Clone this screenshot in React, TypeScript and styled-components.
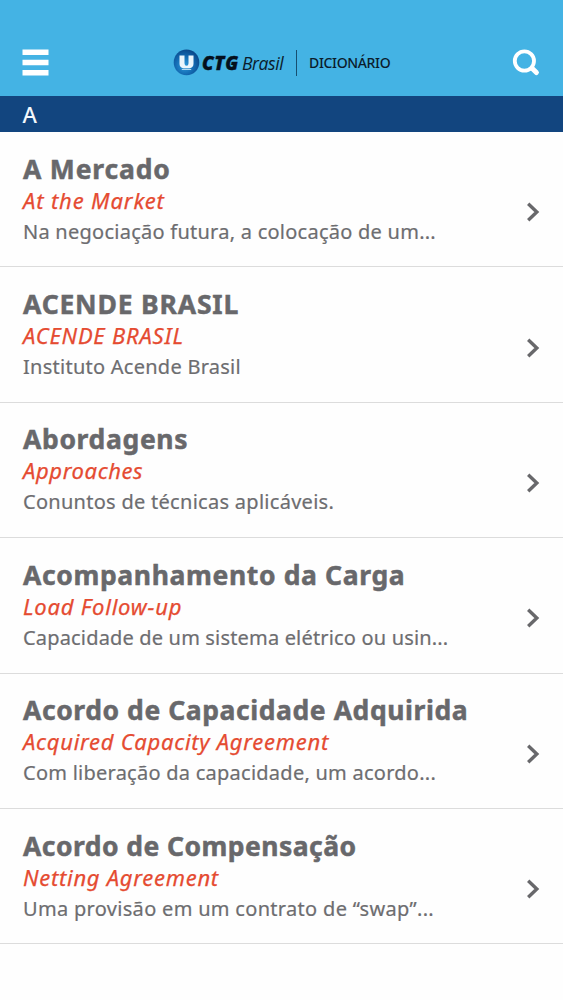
import React from "react";
import styled, { createGlobalStyle } from "styled-components";

const GlobalStyle = createGlobalStyle`
  body { margin: 0; background: #fefefe; font-family: "Noto Sans", "Open Sans", sans-serif; }
`;

const Screen = styled.main`
  width: 563px;
  height: 1000px;
  overflow: hidden;
  background: #fefefe;
`;

const Header = styled.header`
  display: grid;
  grid-template-columns: 60px 1fr 60px;
  align-items: center;
  height: 96px;
  padding-top: 29px;
  box-sizing: border-box;
  background: #44b3e4;
`;

const IconButton = styled.button<{ $side: "left" | "right" }>`
  display: flex;
  justify-content: ${(p) => (p.$side === "left" ? "flex-start" : "flex-end")};
  padding: ${(p) => (p.$side === "left" ? "0 0 0 22px" : "0 23px 0 0")};
  border: 0;
  background: none;
`;

const Brand = styled.div`
  display: flex;
  align-items: center;
  height: 28px;
  padding-left: 113px;
  color: #0b1c2c;
  white-space: nowrap;
`;

const BrandBold = styled.span`
  width: 39px;
  margin-left: 2px;
  color: #04101c;
  font: italic 800 18.5px/28px "Open Sans", sans-serif;
  letter-spacing: 0.7px;
  -webkit-text-stroke: 0.4px currentColor;
`;

const BrandLight = styled.span`
  width: 44px;
  padding-left: 1px;
  box-sizing: border-box;
  font: italic 400 17.5px/28px "Open Sans", sans-serif;
  letter-spacing: -0.4px;
`;

const Divider = styled.i`
  width: 1px;
  height: 26px;
  margin: 0 12px 0 11px;
  background: #174f70;
`;

const Product = styled.span`
  font: 500 14px/28px "Noto Sans", sans-serif;
  letter-spacing: -0.35px;
`;

const SectionBar = styled.h2`
  height: 36px;
  margin: 0;
  padding-left: 22.5px;
  background: #12457f;
  color: #f4f8fc;
  font: 500 22px/36px "Noto Sans", sans-serif;
`;

const List = styled.ul`
  margin: 0;
  padding: 0;
  list-style: none;
`;

const Row = styled.li`
  display: flex;
  align-items: center;
  justify-content: space-between;
  height: 135.4px;
  padding: 0 23px;
  box-sizing: border-box;
  border-bottom: 1px solid #dcdcdc;
`;

const Texts = styled.div`
  display: flex;
  flex-direction: column;
  align-items: flex-start;
  height: 97px;
  white-space: nowrap;
`;

const Title = styled.h3<{ $spacing: number }>`
  margin: 0;
  color: #68686b;
  font: 700 26.5px/36px "Noto Sans", sans-serif;
  letter-spacing: ${(p) => p.$spacing}px;
  -webkit-text-stroke: 0.5px currentColor;
`;

const Translation = styled.em<{ $spacing: number }>`
  color: #e54b31;
  font: italic 400 22px/26px "Noto Sans", sans-serif;
  letter-spacing: ${(p) => p.$spacing}px;
  -webkit-text-stroke: 0.25px currentColor;
`;

const Summary = styled.p<{ $spacing: number }>`
  margin: 4px 0 0;
  color: #6d6d70;
  font: 400 20px/30px "Noto Sans", sans-serif;
  letter-spacing: ${(p) => p.$spacing}px;
  -webkit-text-stroke: 0.2px currentColor;
`;

type Entry = { title: string; translation: string; summary: string; spacing: [number, number, number] };

const entries: Entry[] = [
  { title: "A Mercado", translation: "At the Market", summary: "Na negociação futura, a colocação de um...", spacing: [0.82, 0.85, 0.25] },
  { title: "ACENDE BRASIL", translation: "ACENDE BRASIL", summary: "Instituto Acende Brasil", spacing: [0.82, 0.8, 0.26] },
  { title: "Abordagens", translation: "Approaches", summary: "Conuntos de técnicas aplicáveis.", spacing: [0.65, 0.6, 0.28] },
  { title: "Acompanhamento da Carga", translation: "Load Follow-up", summary: "Capacidade de um sistema elétrico ou usin...", spacing: [0.63, 0.78, 0.17] },
  { title: "Acordo de Capacidade Adquirida", translation: "Acquired Capacity Agreement", summary: "Com liberação da capacidade, um acordo...", spacing: [0.57, 0.72, 0.25] },
  { title: "Acordo de Compensação", translation: "Netting Agreement", summary: "Uma provisão em um contrato de “swap”...", spacing: [0.45, 0.72, 0.31] },
];

const MenuIcon = () => (
  <svg width="27" height="28" viewBox="0 0 27 28" fill="#fff">
    <path d="M.5 .5h26v5.5H.5zM.5 10.8h26v5.5H.5zM.5 21h26v5.4H.5z" />
  </svg>
);

const SearchIcon = () => (
  <svg width="28" height="28" viewBox="0 0 28 28" fill="none" stroke="#fff" strokeLinecap="round">
    <circle cx="12.4" cy="12" r="9.6" strokeWidth="3.8" />
    <path d="M20 19.2l4.4 4.4" strokeWidth="5" />
  </svg>
);

const LogoMark = () => (
  <svg width="27" height="28" viewBox="0 0 27 28">
    <defs>
      <radialGradient id="ball" cx="42%" cy="62%" r="62%">
        <stop offset="0" stopColor="#2b9bdc" />
        <stop offset=".6" stopColor="#1268b0" />
        <stop offset="1" stopColor="#0a4a8c" />
      </radialGradient>
    </defs>
    <circle cx="13.5" cy="13.4" r="12.8" fill="url(#ball)" />
    <path d="M6.5 6.5h5v7.7q0 2.6 2 2.6t2-2.6V6.5h5v8.3q0 3.8-4 4.4h-6q-4-.6-4-4.4z" fill="#e9f5fc" />
    <path d="M8.8 20.4h9.4" stroke="#bfe2f5" strokeWidth="1" />
  </svg>
);

const ChevronIcon = styled.svg`
  flex: none;
  margin-top: 26px;
`;

const Chevron = () => (
  <ChevronIcon width="14" height="20" viewBox="0 0 14 20" fill="none" stroke="#68686b" strokeWidth="3.4">
    <path d="M2.2 1.8l8.6 8.2-8.6 8.2" />
  </ChevronIcon>
);

export default function App() {
  return (
    <Screen>
      <GlobalStyle />
      <Header>
        <IconButton $side="left" aria-label="Menu"><MenuIcon /></IconButton>
        <Brand>
          <LogoMark />
          <BrandBold>CTG</BrandBold>
          <BrandLight>Brasil</BrandLight>
          <Divider />
          <Product>DICIONÁRIO</Product>
        </Brand>
        <IconButton $side="right" aria-label="Buscar"><SearchIcon /></IconButton>
      </Header>
      <SectionBar>A</SectionBar>
      <List>
        {entries.map((e) => (
          <Row key={e.title}>
            <Texts>
              <Title $spacing={e.spacing[0]}>{e.title}</Title>
              <Translation $spacing={e.spacing[1]}>{e.translation}</Translation>
              <Summary $spacing={e.spacing[2]}>{e.summary}</Summary>
            </Texts>
            <Chevron />
          </Row>
        ))}
      </List>
    </Screen>
  );
}
